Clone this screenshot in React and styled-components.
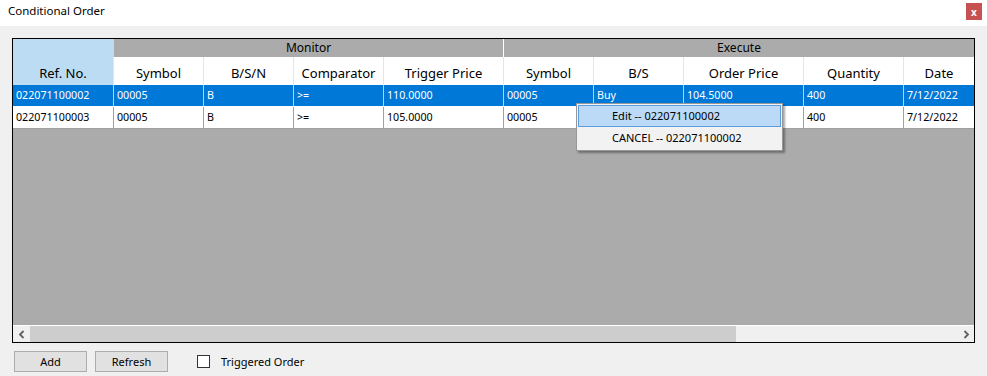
import React from 'react';
import styled, { createGlobalStyle } from 'styled-components';

const GlobalStyle = createGlobalStyle`
  html, body {
    margin: 0;
    padding: 0;
    background: #f0f0f0;
  }
  body {
    font-family: "Noto Sans", "Liberation Sans", sans-serif;
    color: #000;
  }
`;

const Window = styled.div`
  width: 987px;
  height: 376px;
  display: flex;
  flex-direction: column;
  background: #f0f0f0;
  overflow: hidden;
`;

const TitleBar = styled.div`
  height: 26px;
  flex: none;
  background: #ffffff;
  display: flex;
  justify-content: space-between;
  align-items: flex-start;
  padding-left: 8px;
`;

const Title = styled.span`
  font-size: 11.5px;
  line-height: 22px;
`;

const CloseButton = styled.div`
  width: 16px;
  height: 17px;
  margin: 3px 5px 0 0;
  background: #c75050;
  color: #fff;
  font-size: 10px;
  font-weight: bold;
  display: flex;
  align-items: center;
  justify-content: center;
`;

const Body = styled.div`
  padding: 12px 0 0 12px;
  display: flex;
  flex-direction: column;
`;

const GridFrame = styled.div`
  width: 963px;
  height: 305px;
  box-sizing: border-box;
  border: 1px solid #000;
  display: flex;
  flex-direction: column;
  background: #ababab;
`;

const TableArea = styled.div`
  flex: 1;
  overflow: hidden;
  position: relative;
`;

const Row = styled.div`
  display: flex;
  height: ${p => p.$h}px;
  width: max-content;
`;

const GroupCell = styled.div`
  width: ${p => p.$w}px;
  flex: none;
  box-sizing: border-box;
  background: ${p => (p.$active ? '#bcdcf4' : '#ababab')};
  border-right: 1px solid ${p => (p.$divider ? '#ffffff' : 'transparent')};
  font-size: 12px;
  line-height: 18px;
  text-align: center;
`;

const HeadCell = styled.div`
  width: ${p => p.$w}px;
  flex: none;
  box-sizing: border-box;
  background: ${p => (p.$active ? '#bcdcf4' : '#ffffff')};
  border-right: 1px solid #e5e5e5;
  font-size: 13px;
  line-height: 32px;
  text-align: center;
  white-space: nowrap;
  overflow: hidden;
`;

const DataCell = styled.div`
  width: ${p => p.$w}px;
  flex: none;
  box-sizing: border-box;
  background: ${p => (p.$selected ? '#0078d7' : '#ffffff')};
  color: ${p => (p.$selected ? '#ffffff' : '#000000')};
  border-right: 1px solid ${p => (p.$selected ? '#b5d3ee' : '#a0a0a0')};
  border-bottom: 1px solid ${p => (p.$selected ? '#ffffff' : '#a0a0a0')};
  padding-left: 3px;
  font-size: 10.7px;
  line-height: 21px;
  white-space: nowrap;
  overflow: hidden;
`;

const ContextMenu = styled.div`
  position: absolute;
  left: 563px;
  top: 64px;
  width: 207px;
  box-sizing: border-box;
  padding: 1px;
  background: #f2f2f2;
  border: 1px solid #979797;
  box-shadow: 2px 2px 2px rgba(0, 0, 0, 0.35);
`;

const MenuItem = styled.div`
  height: 22px;
  box-sizing: border-box;
  padding-left: 33px;
  font-size: 11px;
  line-height: 20px;
  border: 1px solid ${p => (p.$active ? '#5b9ee0' : 'transparent')};
  background: ${p => (p.$active ? '#bcd9f5' : 'transparent')};
`;

const Scrollbar = styled.div`
  height: 17px;
  flex: none;
  box-sizing: border-box;
  border-top: 1px solid #ffffff;
  background: #f0f0f0;
  display: flex;
`;

const ScrollArrow = styled.div`
  width: 17px;
  flex: none;
  display: flex;
  align-items: center;
  justify-content: center;
`;

const ScrollTrack = styled.div`
  flex: 1;
  display: flex;
`;

const Thumb = styled.div`
  width: 706px;
  background: #cdcdcd;
`;

const Footer = styled.div`
  display: flex;
  align-items: center;
  margin-top: 8px;
  padding-left: 2px;
`;

const Button = styled.button`
  width: 73px;
  height: 21px;
  margin: 0 8px 0 0;
  padding: 0;
  box-sizing: border-box;
  border: 1px solid #adadad;
  background: #e1e1e1;
  font-family: "Noto Sans", "Liberation Sans", sans-serif;
  font-size: 11px;
  color: #000;
`;

const CheckBox = styled.span`
  width: 13px;
  height: 13px;
  margin-left: 21px;
  box-sizing: border-box;
  border: 1px solid #333;
  background: #fff;
`;

const CheckLabel = styled.span`
  margin-left: 11px;
  font-size: 11px;
`;

const columns = [
  { label: 'Ref. No.', w: 101 },
  { label: 'Symbol', w: 90 },
  { label: 'B/S/N', w: 90 },
  { label: 'Comparator', w: 90 },
  { label: 'Trigger Price', w: 120 },
  { label: 'Symbol', w: 90 },
  { label: 'B/S', w: 90 },
  { label: 'Order Price', w: 120 },
  { label: 'Quantity', w: 100 },
  { label: 'Date', w: 71 },
];

// row 2 B/S and Order Price sit under the context menu
const rows = [
  ['022071100002', '00005', 'B', '>=', '110.0000', '00005', 'Buy', '104.5000', '400', '7/12/2022'],
  ['022071100003', '00005', 'B', '>=', '105.0000', '00005', '', '', '400', '7/12/2022'],
];

const Chevron = ({ dir }) => (
  <svg width="8" height="9" viewBox="0 0 8 9">
    <path
      d={dir === 'left' ? 'M5.5 1 L2 4.5 L5.5 8' : 'M2.5 1 L6 4.5 L2.5 8'}
      fill="none"
      stroke="#606060"
      strokeWidth="1.8"
    />
  </svg>
);

export default function App() {
  return (
    <Window>
      <GlobalStyle />
      <TitleBar>
        <Title>Conditional Order</Title>
        <CloseButton>x</CloseButton>
      </TitleBar>
      <Body>
        <GridFrame>
          <TableArea>
            <Row $h={18}>
              <GroupCell $w={101} $active />
              <GroupCell $w={390} $divider>Monitor</GroupCell>
              <GroupCell $w={471}>Execute</GroupCell>
            </Row>
            <Row $h={28}>
              {columns.map((c, i) => (
                <HeadCell key={i} $w={c.w} $active={i === 0}>{c.label}</HeadCell>
              ))}
            </Row>
            {rows.map((r, ri) => (
              <Row key={ri} $h={22}>
                {r.map((v, ci) => (
                  <DataCell key={ci} $w={columns[ci].w} $selected={ri === 0}>{v}</DataCell>
                ))}
              </Row>
            ))}
            <ContextMenu>
              <MenuItem $active>Edit -- 022071100002</MenuItem>
              <MenuItem>CANCEL -- 022071100002</MenuItem>
            </ContextMenu>
          </TableArea>
          <Scrollbar>
            <ScrollArrow><Chevron dir="left" /></ScrollArrow>
            <ScrollTrack><Thumb /></ScrollTrack>
            <ScrollArrow><Chevron dir="right" /></ScrollArrow>
          </Scrollbar>
        </GridFrame>
        <Footer>
          <Button>Add</Button>
          <Button>Refresh</Button>
          <CheckBox />
          <CheckLabel>Triggered Order</CheckLabel>
        </Footer>
      </Body>
    </Window>
  );
}
